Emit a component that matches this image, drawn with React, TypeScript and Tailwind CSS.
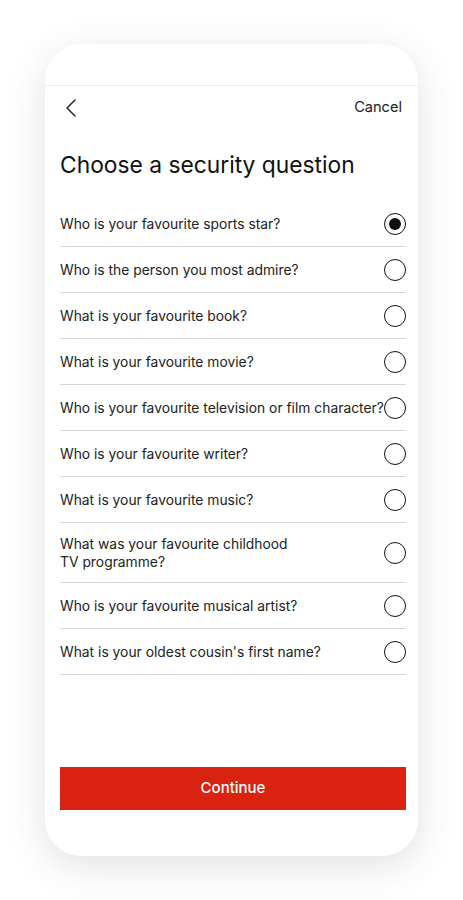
import React from "react";

const questions: { text: React.ReactNode; tall?: boolean }[] = [
  { text: "Who is your favourite sports star?" },
  { text: "Who is the person you most admire?" },
  { text: "What is your favourite book?" },
  { text: "What is your favourite movie?" },
  { text: "Who is your favourite television or film character?" },
  { text: "Who is your favourite writer?" },
  { text: "What is your favourite music?" },
  {
    text: (
      <>
        What was your favourite childhood
        <br />
        TV programme?
      </>
    ),
    tall: true,
  },
  { text: "Who is your favourite musical artist?" },
  { text: "What is your oldest cousin's first name?" },
];

function Radio({ checked }: { checked: boolean }) {
  return (
    <div className="flex h-[22px] w-[22px] shrink-0 items-center justify-center rounded-full border-[1.5px] border-[#111]">
      {checked && <div className="h-[12px] w-[12px] rounded-full bg-[#111]" />}
    </div>
  );
}

export default function App() {
  return (
    <div
      className="min-h-[900px] w-[463px] bg-white pt-[44px] pl-[45px]"
      style={{ fontFamily: "Inter, 'Noto Sans', sans-serif" }}
    >
      <div className="flex h-[812px] w-[373px] flex-col rounded-[36px] bg-white shadow-[0_10px_40px_rgba(0,0,0,0.12)]">
        <div className="h-[42px] shrink-0 border-b border-[#eeeeee]" />
        <div className="flex h-[44px] items-center justify-between pl-[20px] pr-[16px]">
          <svg width="12" height="20" viewBox="0 0 12 20" fill="none">
            <path d="M10 2L2 10l8 8" stroke="#222" strokeWidth="1.5" strokeLinecap="round" strokeLinejoin="round" />
          </svg>
          <span className="text-[14.6px] text-[#222]">Cancel</span>
        </div>
        <h1 className="mt-[19px] pl-[15px] text-[22.8px] leading-[32px] text-[#111]">Choose a security question</h1>
        <div className="mt-[20px] ml-[15px] mr-[12px]">
          {questions.map((q, i) => (
            <div
              key={i}
              className={`box-border flex items-center justify-between border-b border-[#d6d6d6] ${
                q.tall ? "h-[60px]" : "h-[46px]"
              }`}
            >
              <span className="whitespace-nowrap text-[13.85px] leading-[18px] text-[#222]">{q.text}</span>
              <Radio checked={i === 0} />
            </div>
          ))}
        </div>
        <div className="mt-auto mb-[46px] ml-[15px] mr-[12px]">
          <button className="flex h-[43px] w-full items-center justify-center bg-[#d92310] text-[15px] font-medium text-white">
            Continue
          </button>
        </div>
      </div>
    </div>
  );
}
